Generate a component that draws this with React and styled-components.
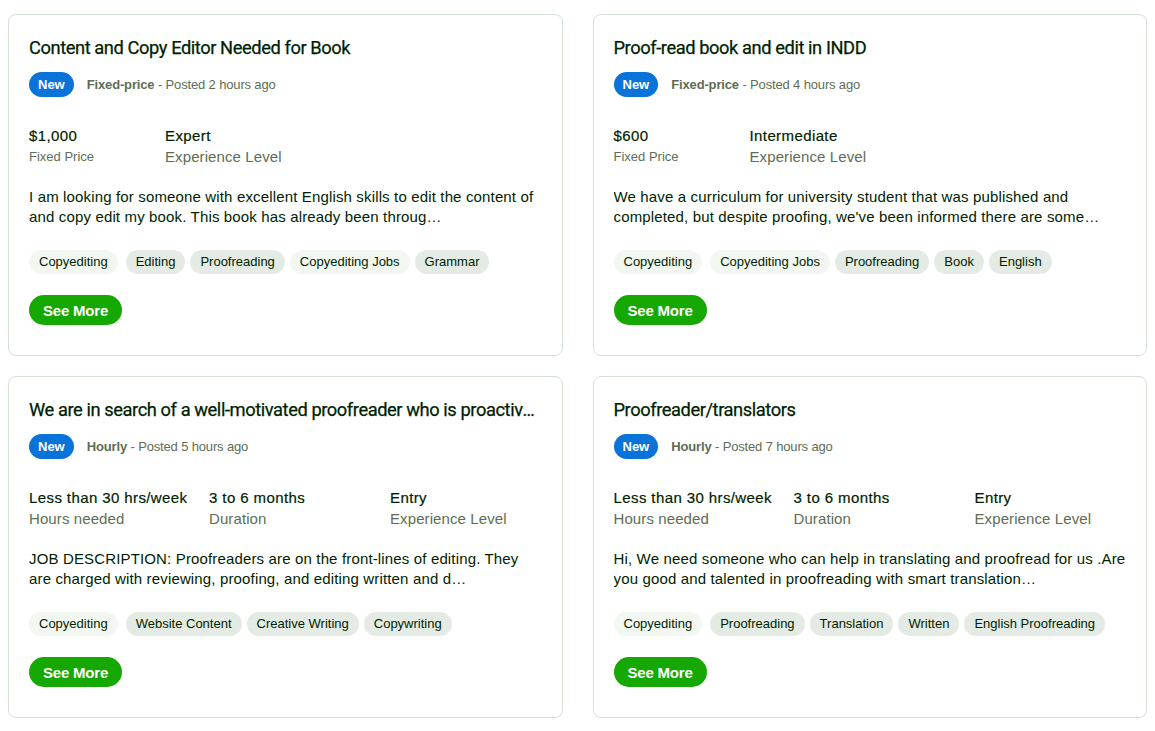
import React from 'react'
import styled, { createGlobalStyle } from 'styled-components'

const GlobalStyle = createGlobalStyle`
  body {
    margin: 8px;
    background: #ffffff;
    font-family: "Liberation Sans", Arial, sans-serif;
    color: #001e00;
  }
`

const Grid = styled.div`
  display: grid;
  grid-template-columns: 1fr 1fr;
  column-gap: 30px;
  row-gap: 20px;
  padding-top: 6px;
`

const Card = styled.div`
  border: 1px solid #d5e0d5;
  border-radius: 8px;
  padding: 21px 20px 30px;
  display: flex;
  flex-direction: column;
  min-width: 0;
`

const Title = styled.h3`
  margin: 0;
  font-family: Roboto, "Liberation Sans", sans-serif;
  font-size: 18.3px;
  line-height: 24px;
  font-weight: 400;
  letter-spacing: -0.42px;
  color: #001e00;
  -webkit-text-stroke: 0.25px #001e00;
  white-space: nowrap;
  overflow: hidden;
  text-overflow: ellipsis;
`

const MetaRow = styled.div`
  display: flex;
  align-items: center;
  gap: 13px;
  margin-top: 12px;
`

const Badge = styled.span`
  background: #0a73d9;
  color: #fff;
  font-size: 13px;
  font-weight: 700;
  height: 25px;
  line-height: 25px;
  padding: 0 9px;
  border-radius: 13px;
`

const Meta = styled.span`
  font-size: 13px;
  color: #5e6d55;
  letter-spacing: -0.15px;
  b { font-weight: 700; }
`

const Stats = styled.div`
  display: grid;
  grid-template-columns: ${p => p.$cols};
  margin-top: 29px;
`

const StatValue = styled.div`
  font-size: 15px;
  line-height: 20px;
  letter-spacing: 0.4px;
  color: #001e00;
  -webkit-text-stroke: 0.2px #001e00;
`

const StatLabel = styled.div`
  font-size: ${p => (p.$small ? '13px' : '15px')};
  line-height: 21px;
  color: #5e6d55;
  letter-spacing: ${p => (p.$small ? '0' : '0.1px')};
`

const Desc = styled.p`
  margin: 20px 0 0;
  font-size: 15px;
  line-height: 20px;
  letter-spacing: 0.15px;
  color: #001e00;
  display: -webkit-box;
  -webkit-line-clamp: 2;
  -webkit-box-orient: vertical;
  overflow: hidden;
`

const Tags = styled.div`
  display: flex;
  flex-wrap: wrap;
  gap: 5px;
  margin-top: 23px;
`

const Tag = styled.span`
  height: 24px;
  line-height: 24px;
  padding: 0 10px;
  border-radius: 12px;
  font-size: 13px;
  color: #001e00;
  background: ${p => (p.$light ? '#f2f7f2' : '#e4ebe4')};
  &:first-child { margin-right: 3px; }
`

const Button = styled.button`
  align-self: flex-start;
  margin-top: 21px;
  height: 30px;
  padding: 0 14px;
  border: none;
  border-radius: 15px;
  background: #14a800;
  color: #fff;
  font-family: inherit;
  font-size: 15px;
  font-weight: 700;
  letter-spacing: -0.2px;
  cursor: pointer;
`

const jobs = [
  {
    title: 'Content and Copy Editor Needed for Book',
    kind: 'Fixed-price',
    posted: 'Posted 2 hours ago',
    cols: '136px auto',
    stats: [
      { value: '$1,000', label: 'Fixed Price', small: true },
      { value: 'Expert', label: 'Experience Level' },
    ],
    desc: 'I am looking for someone with excellent English skills to edit the content of and copy edit my book. This book has already been throug…',
    tags: [['Copyediting', true], ['Editing'], ['Proofreading'], ['Copyediting Jobs', true], ['Grammar']],
  },
  {
    title: 'Proof-read book and edit in INDD',
    kind: 'Fixed-price',
    posted: 'Posted 4 hours ago',
    cols: '136px auto',
    stats: [
      { value: '$600', label: 'Fixed Price', small: true },
      { value: 'Intermediate', label: 'Experience Level' },
    ],
    desc: "We have a curriculum for university student that was published and completed, but despite proofing, we've been informed there are some…",
    tags: [['Copyediting', true], ['Copyediting Jobs', true], ['Proofreading'], ['Book'], ['English']],
  },
  {
    title: 'We are in search of a well-motivated proofreader who is proactive and detail oriented',
    kind: 'Hourly',
    posted: 'Posted 5 hours ago',
    cols: '180px 181px auto',
    stats: [
      { value: 'Less than 30 hrs/week', label: 'Hours needed' },
      { value: '3 to 6 months', label: 'Duration' },
      { value: 'Entry', label: 'Experience Level' },
    ],
    desc: 'JOB DESCRIPTION: Proofreaders are on the front-lines of editing. They are charged with reviewing, proofing, and editing written and d…',
    tags: [['Copyediting', true], ['Website Content'], ['Creative Writing'], ['Copywriting']],
  },
  {
    title: 'Proofreader/translators',
    kind: 'Hourly',
    posted: 'Posted 7 hours ago',
    cols: '180px 181px auto',
    stats: [
      { value: 'Less than 30 hrs/week', label: 'Hours needed' },
      { value: '3 to 6 months', label: 'Duration' },
      { value: 'Entry', label: 'Experience Level' },
    ],
    desc: 'Hi, We need someone who can help in translating and proofread for us .Are you good and talented in proofreading with smart translation…',
    tags: [['Copyediting', true], ['Proofreading'], ['Translation'], ['Written'], ['English Proofreading']],
  },
]

const JobCard = ({ job }) => (
  <Card>
    <Title>{job.title}</Title>
    <MetaRow>
      <Badge>New</Badge>
      <Meta><b>{job.kind}</b> - {job.posted}</Meta>
    </MetaRow>
    <Stats $cols={job.cols}>
      {job.stats.map(s => (
        <div key={s.value}>
          <StatValue>{s.value}</StatValue>
          <StatLabel $small={s.small}>{s.label}</StatLabel>
        </div>
      ))}
    </Stats>
    <Desc>{job.desc}</Desc>
    <Tags>
      {job.tags.map(([name, light]) => (
        <Tag key={name} $light={light}>{name}</Tag>
      ))}
    </Tags>
    <Button>See More</Button>
  </Card>
)

export default function App() {
  return (
    <>
      <GlobalStyle />
      <Grid>
        {jobs.map(j => <JobCard key={j.title} job={j} />)}
      </Grid>
    </>
  )
}
